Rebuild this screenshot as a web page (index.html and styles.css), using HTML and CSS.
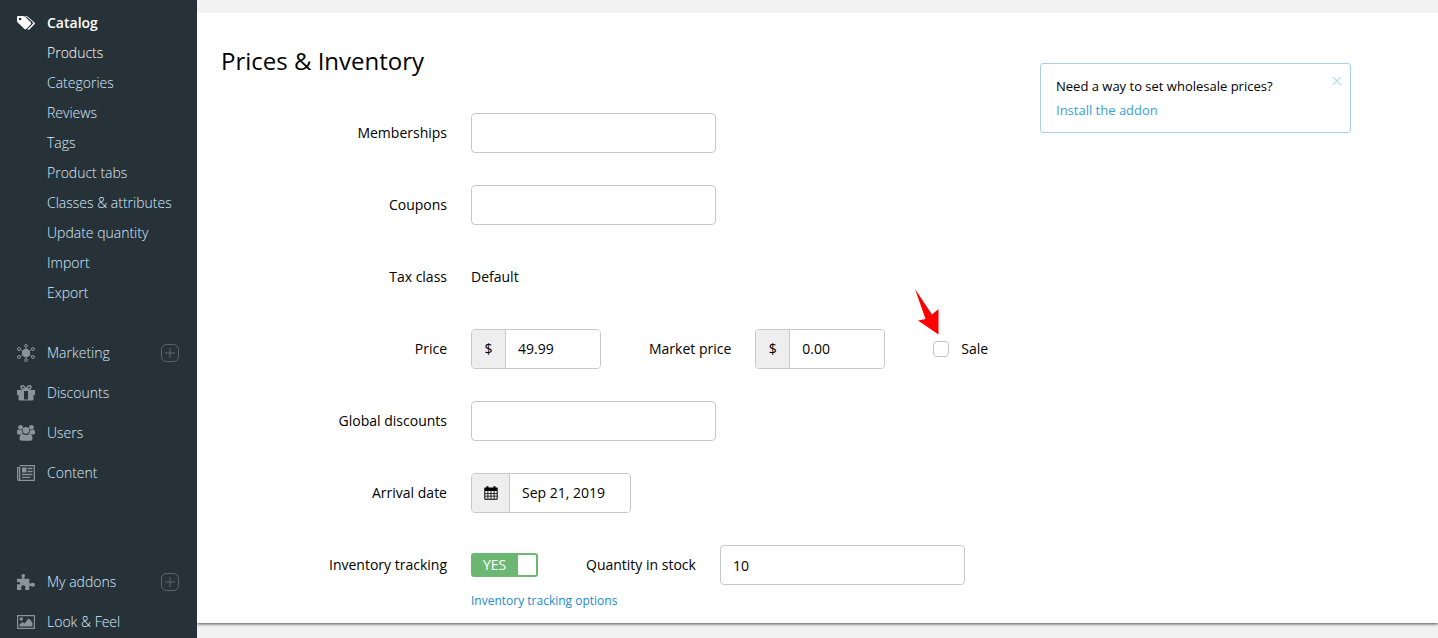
FILE: index.html
```html
<!DOCTYPE html>
<html lang="en">
<head>
<meta charset="utf-8">
<title>Prices &amp; Inventory</title>
<link rel="stylesheet" href="styles.css">
</head>
<body>
<div class="app">
  <nav class="sidebar" aria-label="Main menu">
    <div class="menu">
      <a class="menu-item current" href="#">
        <svg class="icon" viewBox="0 0 18 18" fill="currentColor"><path fill-rule="evenodd" d="M0 3a1 1 0 0 1 1-1h5.200q1 0 1.700.700l5.900 5.800q.800.900 0 1.700l-4.600 4.900q-.900.800-1.700 0L.700 8.400Q0 7.700 0 6.700zM3.100 3.700a1.300 1.300 0 1 0 0 2.600 1.300 1.300 0 0 0 0-2.600z"/><path d="M7.800 2h1.400q.900 0 1.600.700l6.600 5.900q.900.800.100 1.700l-5.100 5.100q-.900.800-1.700.100l-.5-.5 5.200-5.200q.5-.5 0-1z"/><path d="m9.400 2.900 5.900 5.500q.7.800 0 1.500L10.200 15" fill="none" stroke="#263238"/></svg>
        <span>Catalog</span>
      </a>
      <ul class="submenu">
        <li><a class="active" href="#">Products</a></li>
        <li><a href="#">Categories</a></li>
        <li><a href="#">Reviews</a></li>
        <li><a href="#">Tags</a></li>
        <li><a href="#">Product tabs</a></li>
        <li><a href="#">Classes &amp; attributes</a></li>
        <li><a href="#">Update quantity</a></li>
        <li><a href="#">Import</a></li>
        <li><a href="#">Export</a></li>
      </ul>
    </div>
    <div class="menu spaced">
      <div class="menu-row">
        <a class="menu-item" href="#">
          <svg class="icon" viewBox="0 0 18 18" fill="none" stroke="currentColor"><circle cx="9" cy="9" r="4.200" fill="currentColor" stroke="none"/><path stroke-width=".8" d="M9 3.500v11M3.300 5.700l11.400 6.600M3.300 12.300l11.400-6.600"/><circle cx="9" cy="1.900" r="1.400"/><circle cx="9" cy="16.100" r="1.400"/><circle cx="2" cy="5" r="1.500"/><circle cx="16" cy="5" r="1.500"/><circle cx="2" cy="13" r="1.500"/><circle cx="16" cy="13" r="1.500"/></svg>
          <span>Marketing</span>
        </a>
        <button class="add" type="button" aria-label="Expand Marketing"><svg viewBox="0 0 18 18" fill="none" stroke="currentColor"><rect x=".5" y=".5" width="17" height="17" rx="5"/><path d="M9 4v10M4 9h10"/></svg></button>
      </div>
      <a class="menu-item" href="#">
        <svg class="icon" viewBox="0 0 18 18" fill="currentColor"><path d="M0 6h7v10.500H3q-1.500 0-1.500-1.500v-4H0zM11 6h7v5h-1.500v4q0 1.500-1.500 1.500h-4zM7 6h4v1H7zM7 15.500h4v1H7z"/><path d="M9 5.500C7.500 1 4 .800 4 3.200 4 5 6 5.300 9 5.300s5-.3 5-2.100C14 .800 10.500 1 9 5.500z" fill="none" stroke="currentColor" stroke-width="1.500"/></svg>
        <span>Discounts</span>
      </a>
      <a class="menu-item" href="#">
        <svg class="icon" viewBox="0 0 18 18" fill="currentColor"><circle cx="3.600" cy="3.300" r="2.400"/><circle cx="14.400" cy="3.300" r="2.400"/><circle cx="9" cy="6.300" r="3.400"/><path d="M0 9.500V7.700Q0 5.500 1.600 5.500q1.700 1 3.200.4Q4.800 8.500 6 9.500L4 10.500H1.500Q0 10.500 0 9.500zM18 9.500V7.700q0-2.200-1.600-2.200-1.700 1-3.200.4 0 2.600-1.200 3.600l2 1h2.500q1.500 0 1.500-1zM2.500 14.500q0-4.200 3.300-4.500Q9 12 12.200 10q3.300.3 3.300 4.500 0 2.300-2.300 2.300H4.800q-2.300 0-2.300-2.300z"/></svg>
        <span>Users</span>
      </a>
      <a class="menu-item" href="#">
        <svg class="icon" viewBox="0 0 18 18" fill="none" stroke="currentColor" stroke-width="1.300"><path d="M2.700 1.700h14.600v14.600H1.700q-1 0-1-1.300V3.700h2V15q0 1.300-1 1.300"/><path d="M10.500 4.500h5M10.500 7.500h5M5 10.500h10.500M5 13.300h8.500"/><path d="M5 3.500h4.500v5H5z" fill="currentColor" stroke="none"/></svg>
        <span>Content</span>
      </a>
    </div>
    <div class="menu bottom">
      <div class="menu-row">
        <a class="menu-item" href="#">
          <svg class="icon" viewBox="0 0 18 18" fill="currentColor"><path d="M0 5.700h4.300q1.200 0 .9-1.300-.9-1-.9-1.900Q4.300 1 6.200 1t1.900 1.500q0 .9-.9 1.900-.3 1.300.9 1.300h4.200v4.100q.2 1.100 1.300.8 1-.9 2.300-.9 2.100 0 2.100 2t-2.100 2q-1.300 0-2.300-1-1.100-.2-1.300 1V17H8.800q-1-.2-.8-1.300.5-.9.500-1.500Q8.300 12.300 6.300 12.300t-2.200 1.900q0 .6.500 1.500.2 1.100-.8 1.300H0v-5.400q.3-.8 1.100-.3 1.400.7 2-.8-.1-1.600-1.600-1.400-1.300.6-1.500-.2z"/></svg>
          <span>My addons</span>
        </a>
        <button class="add" type="button" aria-label="Expand My addons"><svg viewBox="0 0 18 18" fill="none" stroke="currentColor"><rect x=".5" y=".5" width="17" height="17" rx="5"/><path d="M9 4v10M4 9h10"/></svg></button>
      </div>
      <a class="menu-item" href="#">
        <svg class="icon" viewBox="0 0 18 18" fill="currentColor"><rect x=".6" y="2.600" width="16.800" height="12.800" fill="none" stroke="currentColor" stroke-width="1.200"/><circle cx="4.300" cy="6" r="1.700"/><path d="M2.500 13.500v-2L5.500 9l2 1.500 4-5 2 1.500 2 3v3.500z"/></svg>
        <span>Look &amp; Feel</span>
      </a>
    </div>
  </nav>

  <main class="main">
    <section class="card">
      <form class="form">
        <h1 class="title">Prices &amp; Inventory</h1>
        <div class="fields">
          <label for="memberships">Memberships</label>
          <div class="field"><input class="box" id="memberships" type="text"></div>

          <label for="coupons">Coupons</label>
          <div class="field"><input class="box" id="coupons" type="text"></div>

          <span class="label">Tax class</span>
          <div class="field">Default</div>

          <label for="price">Price</label>
          <div class="field">
            <div class="group money"><span class="addon">$</span><input id="price" type="text" value="49.99"></div>
            <div class="pair">
              <label for="market">Market price</label>
              <div class="group money"><span class="addon">$</span><input id="market" type="text" value="0.00"></div>
            </div>
            <div class="sale">
              <input class="check" id="sale" type="checkbox"><label for="sale">Sale</label>
              <svg class="pointer" viewBox="0 0 26 46" fill="#f00"><path d="M1 0 18 25.500 24.500 20V45.500L4 31.500l7.500-1.500z"/></svg>
            </div>
          </div>

          <label for="discounts">Global discounts</label>
          <div class="field"><input class="box" id="discounts" type="text"></div>

          <label for="arrival">Arrival date</label>
          <div class="field">
            <div class="group date">
              <span class="addon"><svg class="calendar" viewBox="0 0 14 14"><path fill="currentColor" fill-rule="evenodd" d="M1 1.500h1.500V.500Q3.500-.500 4.500.500v1h5v-1q1-1 2 0v1H13q.7 0 .7.700V13q0 .8-.8.800H1.100Q.3 13.800.3 13V2.200q0-.7.700-.7zM1.300 5v2h2.200V5zm3 0v2h2.300V5zm3.100 0v2h2.300V5zm3.100 0v2h2.200V5zM1.300 7.800v2h2.200v-2zm3 0v2h2.300v-2zm3.100 0v2h2.300v-2zm3.100 0v2h2.200v-2zm-9.200 2.800v2.200h2.200v-2.200zm3 0v2.200h2.300v-2.200zm3.100 0v2.200h2.300v-2.200zm3.100 0v2.200h2.200v-2.200z"/></svg></span>
              <input id="arrival" type="text" value="Sep 21, 2019">
            </div>
          </div>

          <label for="tracking">Inventory tracking</label>
          <div class="field">
            <span class="toggle"><input id="tracking" type="checkbox" checked><span class="toggle-text">YES</span><span class="knob"></span></span>
            <div class="pair">
              <label for="quantity">Quantity in stock</label>
              <input class="box" id="quantity" type="text" value="10">
            </div>
          </div>
        </div>
        <a class="options" href="#">Inventory tracking options</a>
      </form>
      <aside class="notice">
        <div>
          <p>Need a way to set wholesale prices?</p>
          <a href="#">Install the addon</a>
        </div>
        <button class="close" type="button" aria-label="Close"><svg viewBox="0 0 10 10" fill="none" stroke="currentColor" stroke-width="1.500"><path d="m1 1 8 8M9 1 1 9"/></svg></button>
      </aside>
    </section>
  </main>
</div>
</body>
</html>
```
FILE: styles.css
```css
* {
  box-sizing: border-box;
}

body {
  margin: 0;
  background: #f2f2f2;
  color: #000;
  font: 14px/20px "Open Sans", sans-serif;
}

a {
  color: #2289cc;
  text-decoration: none;
}

button {
  padding: 0;
  border: 0;
  background: none;
}

.app {
  display: flex;
  min-height: 100vh;
}

/* Sidebar */
.sidebar {
  display: flex;
  flex: none;
  flex-direction: column;
  width: 197px;
  padding: 8px 18px 1px 17px;
  background: #263238;
  font-weight: 300;
}

.menu {
  display: flex;
  flex-direction: column;
}

.spaced,
.bottom {
  gap: 10px;
}

.spaced {
  margin-top: 30px;
}

.bottom {
  margin-top: auto;
}

.menu-row {
  display: flex;
  align-items: center;
  justify-content: space-between;
}

.menu-item {
  display: flex;
  align-items: center;
  gap: 12px;
  color: #d8ebff;
  line-height: 30px;
}

.icon {
  width: 18px;
  height: 18px;
  color: #8a949d;
}

.current,
.current .icon {
  color: #fff;
  font-weight: 600;
}

.submenu {
  margin: 0;
  padding: 0 0 0 30px;
  list-style: none;
  line-height: 30px;
}

.submenu a {
  color: #d8ebff;
}

.submenu .active {
  color: #fff;
}

.add {
  width: 18px;
  height: 18px;
  color: #5d686d;
}

.add svg,
.close svg {
  display: block;
}

/* Content card */
.main {
  flex: 1;
  padding: 13px 0 14px;
}

.card {
  display: flex;
  justify-content: space-between;
  align-items: flex-start;
  padding: 32px 87px 12px 24px;
  background: #fff;
  box-shadow: 0 1px 3px rgba(0, 0, 0, 0.7);
  clip-path: inset(0 0 -8px 0);
}

.title {
  margin: 0 0 36px;
  font-size: 24px;
  font-weight: 400;
  line-height: 32px;
}

.fields {
  display: grid;
  grid-template-columns: 226px auto;
  gap: 32px 24px;
  align-items: center;
}

.fields > label,
.label {
  text-align: right;
}

.field {
  display: flex;
  align-items: center;
  gap: 48px;
  min-height: 40px;
}

.pair {
  display: flex;
  align-items: center;
  gap: 24px;
}

input {
  margin: 0;
  color: inherit;
  font: inherit;
}

.box {
  width: 245px;
  height: 40px;
  padding: 0 12px;
  border: 1px solid #c8c8c8;
  border-radius: 4px;
  background: #fff;
}

.group {
  display: flex;
  height: 40px;
  overflow: hidden;
  border: 1px solid #c8c8c8;
  border-radius: 4px;
}

.money {
  width: 130px;
}

.date {
  width: 160px;
}

.addon {
  display: flex;
  flex: none;
  align-items: center;
  justify-content: center;
  width: 34px;
  border-right: 1px solid #c8c8c8;
  background: #eee;
}

.date .addon {
  width: 38px;
}

.calendar {
  width: 14px;
  height: 14px;
}

.group input {
  flex: 1;
  min-width: 0;
  padding: 0 12px;
  border: 0;
  background: #fff;
}

.sale {
  position: relative;
  display: flex;
  align-items: center;
  gap: 12px;
}

.check {
  width: 16px;
  height: 16px;
  border: 1px solid #c4c4c4;
  border-radius: 4px;
  background: #fff;
  appearance: none;
}

.check:checked {
  background: #6cb873;
}

/* Red arrow drawn over the form */
.pointer {
  position: absolute;
  bottom: 24px;
  left: -19px;
  width: 26px;
  height: 46px;
}

.toggle {
  position: relative;
  display: flex;
  justify-content: space-between;
  width: 67px;
  height: 24px;
  padding: 2px 2px 2px 12px;
  border-radius: 3px;
  background: #6cb873;
  color: #fff;
}

.toggle input {
  position: absolute;
  inset: 0;
  width: 100%;
  height: 100%;
  opacity: 0;
}

.knob {
  width: 18px;
  border-radius: 1px;
  background: #fff;
}

.options {
  display: block;
  width: max-content;
  margin: 6px 0 0 250px;
  font-size: 12px;
}

/* Addon notice */
.notice {
  display: flex;
  justify-content: space-between;
  width: 311px;
  margin-top: 18px;
  padding: 10px 8px 10px 15px;
  border: 1px solid #a9d3e6;
  border-radius: 3px;
  font-size: 13px;
  line-height: 24px;
}

.notice p {
  margin: 0;
}

.notice a {
  color: #37a1dc;
}

.close {
  width: 10px;
  height: 10px;
  margin-top: 2px;
  color: #c3e2f0;
}
```
